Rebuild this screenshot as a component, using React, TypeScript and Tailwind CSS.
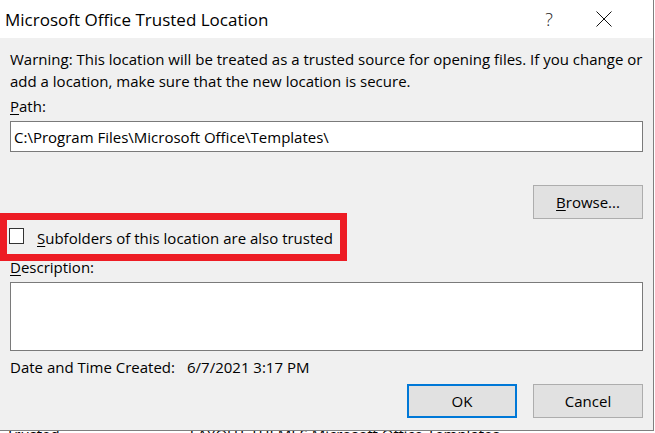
import React from 'react';

const FONT = { fontFamily: '"Segoe UI", "Open Sans", "Noto Sans", sans-serif' };

function Btn({ children, primary }: { children: React.ReactNode; primary?: boolean }) {
  return (
    <button
      className={`w-[110px] h-[34px] bg-[#e1e1e1] text-[15px] text-black flex items-center justify-center ${
        primary ? 'border-2 border-[#0078d7]' : 'border border-[#adadad]'
      }`}
    >
      {children}
    </button>
  );
}

export default function App() {
  return (
    <div className="w-[655px] h-[433px] overflow-hidden bg-white text-black" style={FONT}>
      <div className="relative z-10 w-[654px] h-[431px] bg-[#f0f0f0] border-r border-b border-[#7f7f7f] flex flex-col">
        {/* title bar */}
        <div className="h-[38px] bg-white flex items-center shrink-0">
          <div className="flex-1 pl-[5px] text-[17px] pt-[1px]">Microsoft Office Trusted Location</div>
          <div className="w-[20px] text-[18px] font-light text-[#222] mr-[37px] text-center">?</div>
          <svg width="16" height="16" viewBox="0 0 16 16" className="mr-[41px]">
            <path d="M0.5 0.5 L15.5 15.5 M15.5 0.5 L0.5 15.5" stroke="#111" strokeWidth="1" fill="none" />
          </svg>
        </div>

        {/* body */}
        <div className="flex flex-col px-[10px] text-[15px] leading-[22px]">
          <p className="mt-[10px] whitespace-nowrap">
            Warning: This location will be treated as a trusted source for opening files. If you change or
            <br />
            add a location, make sure that the new location is secure.
          </p>
          <div className="mt-[3px]">
            <span className="underline underline-offset-2">P</span>ath:
          </div>
          <div className="mt-[4px] h-[31px] bg-white border border-[#7a7a7a] flex items-center px-[3px]">
            C:\Program Files\Microsoft Office\Templates\
          </div>

          <div className="flex justify-end mt-[33px]">
            <Btn>
              <span className="underline underline-offset-2">B</span>rowse...
            </Btn>
          </div>

          <div className="-ml-[10px] -mt-[6px] w-[347px] h-[48px] border-[7px] border-[#ed1c24] flex items-center">
            <div className="ml-[2px] -mt-[3px] w-[15px] h-[16px] bg-white border border-[#333]" />
            <span className="ml-[13px] mt-[1px] whitespace-nowrap">
              <span className="underline underline-offset-2">S</span>ubfolders of this location are also trusted
            </span>
          </div>

          <div className="-mt-[5px]">
            <span className="underline underline-offset-2">D</span>escription:
          </div>
          <div className="mt-[4px] h-[69px] bg-white border border-[#7a7a7a]" />

          <div className="mt-[5px] flex">
            <span className="w-[177px]">Date and Time Created:</span>
            <span>6/7/2021 3:17 PM</span>
          </div>

          <div className="mt-[6px] flex justify-end gap-[16px]">
            <Btn primary>OK</Btn>
            <Btn>Cancel</Btn>
          </div>
        </div>
      </div>
      {/* window behind the dialog, only the tops of its text show */}
      <div className="pl-[6px] -mt-[5px] text-[15px] leading-[16px] whitespace-nowrap">
        <span className="mr-[130px]">Trusted</span>
        <span>LAYOUT THEMES Microsoft Office Templates</span>
      </div>
    </div>
  );
}
